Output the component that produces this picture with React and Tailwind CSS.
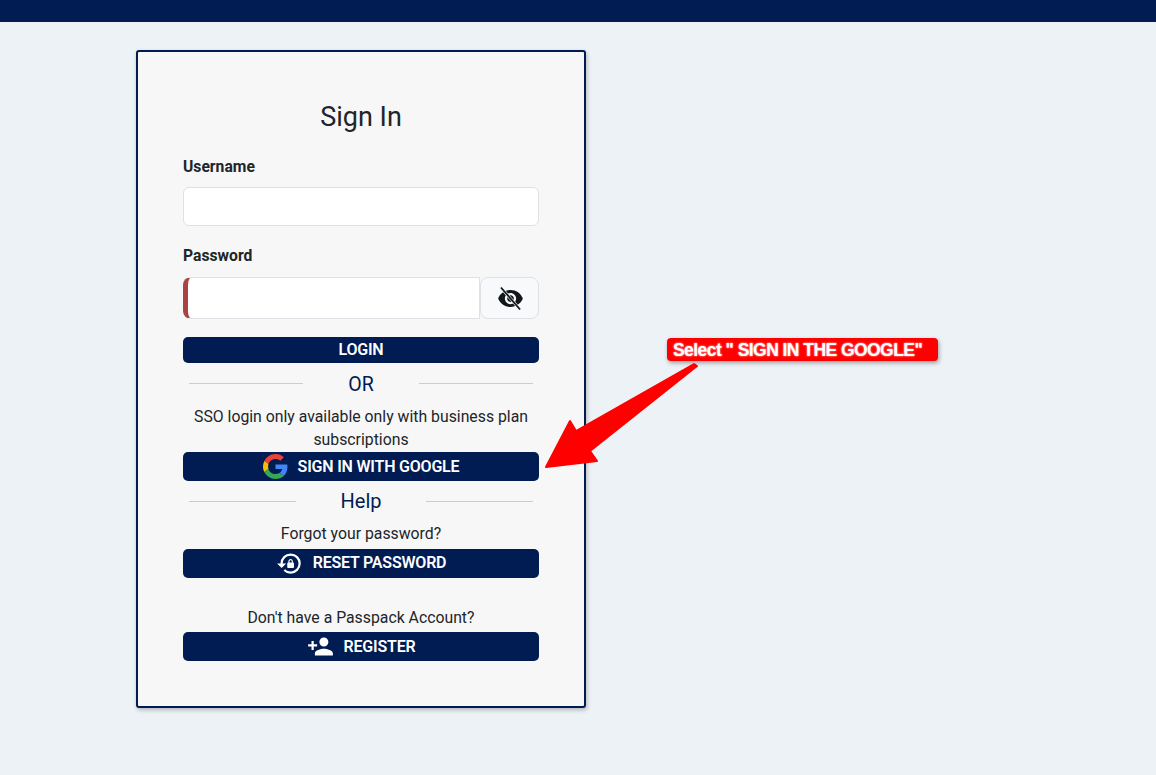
import React from "react";
import { MdLockReset, MdPersonAdd } from "react-icons/md";

function GoogleLogo() {
  return (
    <svg width="25" height="25" viewBox="0 0 48 48" aria-hidden="true">
      <path fill="#EA4335" d="M24 9.5c3.54 0 6.71 1.22 9.21 3.6l6.85-6.85C35.9 2.38 30.47 0 24 0 14.62 0 6.51 5.38 2.56 13.22l7.98 6.19C12.43 13.72 17.74 9.5 24 9.5z" />
      <path fill="#4285F4" d="M46.98 24.55c0-1.57-.15-3.09-.38-4.55H24v9.02h12.94c-.58 2.96-2.26 5.48-4.78 7.18l7.73 6c4.51-4.18 7.09-10.36 7.09-17.65z" />
      <path fill="#FBBC05" d="M10.53 28.59c-.48-1.45-.76-2.99-.76-4.59s.27-3.14.76-4.59l-7.98-6.19C.92 16.46 0 20.12 0 24c0 3.88.92 7.54 2.56 10.78l7.97-6.19z" />
      <path fill="#34A853" d="M24 48c6.48 0 11.93-2.13 15.89-5.81l-7.73-6c-2.15 1.45-4.92 2.3-8.16 2.3-6.26 0-11.57-4.22-13.47-9.91l-7.98 6.19C6.51 42.62 14.62 48 24 48z" />
    </svg>
  );
}

function EyeOff() {
  return (
    <svg width="27" height="27" viewBox="0 0 24 24" aria-hidden="true">
      <path
        fill="#14171a"
        d="M12 4.5C7 4.5 2.73 7.61 1 12c1.73 4.39 6 7.5 11 7.5s9.27-3.11 11-7.5c-1.73-4.39-6-7.5-11-7.5zM12 17c-2.76 0-5-2.24-5-5s2.24-5 5-5 5 2.24 5 5-2.24 5-5 5zm0-8c-1.66 0-3 1.34-3 3s1.34 3 3 3 3-1.34 3-3-1.34-3-3-3z"
      />
      <path d="M3.5 2.2 20.5 21.8" stroke="#f8f9fa" strokeWidth="2.6" fill="none" />
      <path d="M3.5 2.2 20.5 21.8" stroke="#14171a" strokeWidth="1.6" fill="none" />
    </svg>
  );
}

function NavyButton({ h, icon, children, gap = "gap-[10px]", shift = "" }) {
  return (
    <button className={`flex ${h} w-full items-center justify-center ${gap} ${shift} rounded-[5px] bg-[#001c53] text-[16px] font-semibold tracking-[-0.2px] text-white`}>
      {icon}
      <span>{children}</span>
    </button>
  );
}

function Divider({ label, size, lineClass }) {
  return (
    <div className="flex items-center gap-[45px] px-[6px] text-[#001c53]">
      <div className={`${lineClass} h-px flex-1 bg-[#c8ccd4]`} />
      <span className={size}>{label}</span>
      <div className={`${lineClass} h-px flex-1 bg-[#c8ccd4]`} />
    </div>
  );
}

export default function App() {
  return (
    <div className="relative min-h-[775px] overflow-hidden bg-[#edf2f7] font-['Roboto',sans-serif] text-[15.8px] text-[#212529]">
      <div className="h-[22px] bg-[#001c53]" />

      <div className="ml-[136px] mt-[28px] h-[658px] w-[450px] rounded-[3px] border-2 border-[#001c53] bg-[#f7f7f7] px-[45px] shadow-[1px_2px_4px_rgba(0,0,0,0.25)]">
        <h1 className="mt-[47px] text-center text-[27px] leading-[36px]">Sign In</h1>

        <label className="mt-[20px] block text-[15.7px] font-bold leading-[24px]">Username</label>
        <div className="mt-[8px] h-[39px] rounded-[6px] border border-[#dee2e6] bg-white" />

        <label className="mt-[18px] block text-[15.7px] font-bold leading-[24px]">Password</label>
        <div className="mt-[9px] flex h-[42px]">
          <div className="flex-1 rounded-l-[8px] border border-l-[5px] border-[#dee2e6] border-l-[#a94442] bg-white" />
          <div className="flex w-[59px] items-center justify-center rounded-[8px] border border-[#dee2e6] bg-[#f8f9fa] pl-[2px]">
            <EyeOff />
          </div>
        </div>

        <div className="mt-[18px]">
          <NavyButton h="h-[26px]">LOGIN</NavyButton>
        </div>

        <div className="mt-[10px] h-[23px]">
          <Divider label="OR" size="text-[19.5px] leading-[24px]" lineClass="mb-[4px]" />
        </div>

        <p className="mt-[9px] px-[4px] text-center leading-[23px]">
          SSO login only available only with business plan subscriptions
        </p>

        <div className="mt-[1px]">
          <NavyButton h="h-[29px]" icon={<GoogleLogo />}>SIGN IN WITH GOOGLE</NavyButton>
        </div>

        <div className="mt-[7px] h-[26px]">
          <Divider label="Help" size="text-[20px] leading-[26px]" lineClass="mb-0" />
        </div>

        <p className="mt-[8px] text-center leading-[24px]">Forgot your password?</p>

        <div className="mt-[3px]">
          <NavyButton h="h-[29px]" shift="pb-[1px]" icon={<MdLockReset size={27} />}>RESET PASSWORD</NavyButton>
        </div>

        <p className="mt-[28px] text-center leading-[24px]">Don't have a Passpack Account?</p>

        <div className="mt-[2px]">
          <NavyButton h="h-[29px]" icon={<MdPersonAdd size={27} />}>REGISTER</NavyButton>
        </div>
      </div>

      <div className="absolute left-[667px] top-[338px] flex h-[23px] w-[271px] items-center rounded-[4px] bg-[#ff0000] pl-[6px] pt-[1px] font-['Liberation_Sans',sans-serif] text-[17.5px] font-bold tracking-[-0.55px] whitespace-nowrap text-white shadow-[1px_2px_4px_rgba(0,0,0,0.35)] [text-shadow:0_0_2px_rgba(255,255,255,0.9)]">
        Select " SIGN IN THE GOOGLE"
      </div>

      <svg className="absolute left-0 top-0" width="1156" height="775" aria-hidden="true">
        <polygon
          points="697,366 694,364 576,431 570,421 546,467 597,461 590,451"
          fill="#ff0000"
          stroke="#ff0000"
          strokeWidth="2"
          strokeLinejoin="round"
        />
      </svg>
    </div>
  );
}
